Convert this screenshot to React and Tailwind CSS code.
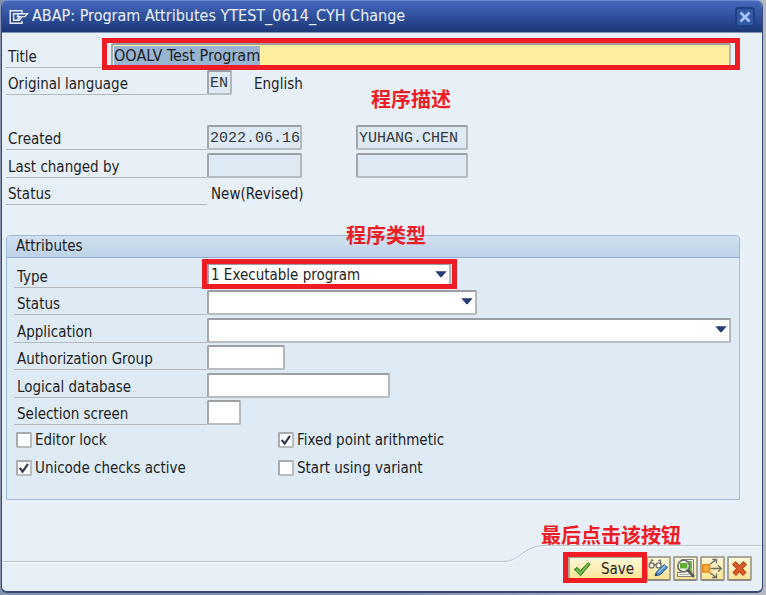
import { useEffect, useRef } from "react";

const frame =
  "h-[25px] rounded-[2px] border-2 border-t-[#9b9fa3] border-l-[#a3a7ab] border-r-[#b4b8bb] border-b-[#b9bdc0] outline-none";
const field = `${frame} bg-white px-[3px]`;
const display = `${frame} bg-[#deeaf3] pt-px pl-px font-['Liberation_Mono',monospace] text-[15px] leading-5 text-[#33363e]`;

function Label({ htmlFor, wide, children }) {
  return (
    <label
      htmlFor={htmlFor}
      className={`flex h-full shrink-0 items-end border-b border-[#b3b8bc] leading-5 ${
        wide ? "w-[201px] pl-[2px]" : "w-[193px] pl-[3px]"
      }`}
    >
      {children}
    </label>
  );
}

function Row({ children }) {
  return <div className="flex min-h-0 items-end">{children}</div>;
}

function Highlight({ className }) {
  return (
    <span aria-hidden="true" className={`pointer-events-none absolute border-5 border-[#ee1c24] ${className}`} />
  );
}

function Note({ className, children }) {
  return (
    <span
      className={`pointer-events-none absolute z-10 whitespace-nowrap font-['Noto_Sans_CJK_SC',sans-serif] text-[20px] font-bold leading-6 text-[#ee1c24] ${className}`}
    >
      {children}
    </span>
  );
}

function Select({ id, className, value }) {
  return (
    <div className={`relative ${className}`}>
      <select
        id={id}
        defaultValue={value}
        className={`${frame} block w-full appearance-none bg-white pl-[2px] leading-5`}
      >
        <option>{value}</option>
      </select>
      <svg viewBox="0 0 12 7" className="pointer-events-none absolute top-[8px] right-[4px] h-[7px] w-[12px]">
        <path d="M.3.3h11.4L6.8 5.9q-.8.8-1.6 0z" fill="#253d74" />
      </svg>
    </div>
  );
}

function Check({ id, checked, children }) {
  return (
    <div className="flex h-[25px] items-center gap-[3px]">
      <span className="relative block size-4">
        <input
          id={id}
          type="checkbox"
          defaultChecked={checked}
          className="peer block size-4 appearance-none rounded-[2px] border-2 border-[#a7abaf] border-r-[#b8bcbf] border-b-[#b8bcbf] bg-white"
        />
        <svg
          viewBox="0 0 16 16"
          className="pointer-events-none absolute inset-0 hidden size-4 peer-checked:block"
        >
          <path d="M3.8 7.8 6.6 11.6 12 3.8" fill="none" stroke="#33344d" strokeWidth="2.1" />
        </svg>
      </span>
      <label htmlFor={id} className="leading-5 whitespace-nowrap">
        {children}
      </label>
    </div>
  );
}

function ToolButton({ label, children, className = "w-[25px] justify-center" }) {
  return (
    <button
      type="button"
      aria-label={label}
      className={`flex h-[25px] items-center rounded-[2px] border-2 border-[#a9a698] border-b-[#8f8d83] bg-linear-to-b from-[#fff9d8] to-[#f8e293] ${className}`}
    >
      {children}
    </button>
  );
}

function GlassesPencil() {
  return (
    <svg viewBox="0 0 21 21" className="size-[21px] shrink-0">
      <g fill="#fffdf0" stroke="#6f6f68" strokeWidth="1.3">
        <circle cx="3.6" cy="7.4" r="2.5" />
        <circle cx="10.6" cy="7.4" r="2.5" />
        <path d="M6.1 7q1-1 2 0M1.4 6 3.8 1.8l1.6.8M12.8 6l-.6-4-1.8.6" fill="none" />
      </g>
      <path d="m7.2 17.6 1.3-3.8 7.9-7.4 3.2 3.2-7.9 7.4z" fill="#4c8fc6" stroke="#2b649d" />
      <path d="m10 14.6 7.4-7" stroke="#a5d0ee" strokeWidth="1.2" />
      <path d="m6.7 18.2 1-3.2 2.2 2.2z" fill="#23446e" />
    </svg>
  );
}

function PageSearch() {
  return (
    <svg viewBox="0 0 21 21" className="size-[21px] shrink-0">
      <path d="M6.5 1.5h12v17h-16v-4h4z" fill="#f5f5ef" stroke="#82827b" />
      <path d="M13 3h4v11h-4z" fill="#73ba3f" />
      <path d="M5 16.5h9" stroke="#a9a9a0" />
      <circle cx="8.7" cy="8" r="5.8" fill="#f7fbf2" stroke="#6d706d" strokeWidth="1.7" />
      <path d="M5 5h7.4v5.6H5z" fill="#62ad34" />
      <path d="m13 12.4 5.2 5.6" stroke="#565a58" strokeWidth="2.8" strokeLinecap="round" />
    </svg>
  );
}

function Distribute() {
  return (
    <svg viewBox="0 0 21 21" className="size-[21px] shrink-0">
      <path d="M1 6.9h6.4v7H1z" fill="#fbb040" stroke="#f08a1d" strokeWidth="1.8" />
      <g fill="none" stroke="#6e6e67" strokeWidth="1.3">
        <path d="M8.5 10.5h10.7M16 7.3l3.3 3.2-3.3 3.2M8 6.2l6-4.4M10.3 1.5h4.2v4M8 14.8l6 4.4M10.3 19.5h4.2v-4" />
      </g>
    </svg>
  );
}

function Cancel() {
  return (
    <svg viewBox="0 0 21 21" className="size-[21px] shrink-0">
      <path d="m4.8 4.8 11 11.4M16.2 4.8l-11 11.4" stroke="#a83c14" strokeWidth="5" />
      <path d="m5.2 5.2 10.2 10.6M15.8 5.2 5.6 15.8" stroke="#d95a29" strokeWidth="3.2" />
    </svg>
  );
}

export default function App() {
  const title = useRef(null);
  useEffect(() => {
    title.current.focus();
    title.current.select();
  }, []);

  return (
    <div className="min-h-screen bg-linear-to-r from-[#8591ad] via-[#8591ad] to-[#b4b7bd] pr-[3px] pl-px font-['DejaVu_Sans_Condensed','DejaVu_Sans',sans-serif] text-[15px] text-[#1c1e24]">
      <main className="overflow-hidden rounded-t-[7px] rounded-b-[6px] border-x border-b-2 border-[#364a7a] bg-[#e8f0f7]">
        <header className="flex h-[33px] items-center border-t border-b border-t-[#6b8bcf] border-b-[#8096bb] bg-linear-to-b from-[#4569bd] to-[#1b3878] pr-[7px] pl-[7px]">
          <svg viewBox="0 0 20 16" className="h-4 w-5" fill="none" stroke="#e6ecf8" strokeWidth="1.4">
            <path d="M13 4V1.7H1.2v12.6H13v-2.5M9.5 4.8H4.6v6.4h3.2l3.4-3.6H8.4l1.4-2.8h8.6l-2.4 2.8h-2.6l-3.2 3.6H7.5" />
          </svg>
          <h1 className="ml-[3px] flex-1 truncate pb-px text-[16px] leading-6 text-[#eef2fb]">
            ABAP: Program Attributes YTEST_0614_CYH Change
          </h1>
          <button
            type="button"
            aria-label="Close"
            className="flex size-5 items-center justify-center rounded-[3px] border-2 border-[#203f83] bg-[#3458a3]"
          >
            <svg viewBox="0 0 12 12" className="size-3 shrink-0" stroke="#a9c4fb" strokeWidth="2.6">
              <path d="m1.5 1.5 9 9M10.5 1.5l-9 9" />
            </svg>
          </button>
        </header>

        <form className="pt-[7px] pr-[22px] pl-[4px]" onSubmit={(e) => e.preventDefault()}>
          <div className="grid h-[165px] grid-rows-6">
            <Row>
              <Label htmlFor="title" wide>Title</Label>
              <div className="relative -ml-[98px] mr-[9px] flex-1 bg-[#e8f0f7] pl-[2px]">
                <input
                  id="title"
                  ref={title}
                  defaultValue="OOALV Test Program"
                  className={`${frame} block w-full bg-[#feee9e] pl-px text-[16px] leading-5 selection:bg-[#99b4d1] selection:text-[#1c1e24]`}
                />
                <Highlight className="-top-[5px] -right-[9px] -bottom-[2px] -left-[7px]" />
              </div>
            </Row>
            <Row>
              <Label htmlFor="lang" wide>Original language</Label>
              <input id="lang" readOnly defaultValue="EN" className={`${display} w-[25px]`} />
              <span className="relative ml-[22px] pb-px leading-5">
                English
                <Note className="top-[13px] left-[117px]">程序描述</Note>
              </span>
            </Row>
            <Row />
            <Row>
              <Label htmlFor="created" wide>Created</Label>
              <input id="created" readOnly defaultValue="2022.06.16" className={`${display} w-[95px]`} />
              <input aria-label="Created by" readOnly defaultValue="YUHANG.CHEN" className={`${display} ml-[54px] w-[112px]`} />
            </Row>
            <Row>
              <Label htmlFor="changed" wide>Last changed by</Label>
              <input id="changed" readOnly className={`${display} w-[95px]`} />
              <input aria-label="Changed by" readOnly className={`${display} ml-[54px] w-[112px]`} />
            </Row>
            <Row>
              <Label wide>Status</Label>
              <output className="pb-px pl-[4px] leading-5">New(Revised)</output>
            </Row>
          </div>

          <section className="relative mt-[30px] rounded-t-[4px] border border-[#9fbbd9] bg-[#deebf4] pb-[19px]">
            <h2 className="h-[22px] rounded-t-[3px] border-b border-[#91acd2] bg-linear-to-b from-[#d0e0ef] to-[#bed3e8] pl-[9px] leading-5">
              Attributes
            </h2>
            <Note className="-top-[13px] left-[339px]">程序类型</Note>
            <div className="mt-[2px] grid h-[220px] grid-rows-8 pr-[8px] pl-[7px]">
              <Row>
                <Label htmlFor="type">Type</Label>
                <div className="relative">
                  <Select id="type" value="1 Executable program" className="w-[244px]" />
                  <Highlight className="-top-[4px] -right-[6px] -bottom-px -left-[5px]" />
                </div>
              </Row>
              <Row>
                <Label htmlFor="status">Status</Label>
                <Select id="status" value="" className="w-[270px]" />
              </Row>
              <Row>
                <Label htmlFor="application">Application</Label>
                <Select id="application" value="" className="flex-1" />
              </Row>
              <Row>
                <Label htmlFor="group">Authorization Group</Label>
                <input id="group" className={`${field} w-[78px]`} />
              </Row>
              <Row>
                <Label htmlFor="database">Logical database</Label>
                <input id="database" className={`${field} w-[183px]`} />
              </Row>
              <Row>
                <Label htmlFor="screen">Selection screen</Label>
                <input id="screen" className={`${field} w-[34px]`} />
              </Row>
              <div className="grid grid-cols-[262px_1fr] items-end pl-[2px]">
                <Check id="lock">Editor lock</Check>
                <Check id="fixed" checked>Fixed point arithmetic</Check>
              </div>
              <div className="grid grid-cols-[262px_1fr] items-end pl-[2px]">
                <Check id="unicode" checked>Unicode checks active</Check>
                <Check id="variant">Start using variant</Check>
              </div>
            </div>
          </section>
        </form>

        <footer className="mt-[45px] flex h-[46px]">
          <div className="h-[17px] flex-1 border-b border-[#b5c2d1] shadow-[0_1px_0_#ffffff]" />
          <svg viewBox="0 0 40 18" className="h-[18px] w-[40px]" fill="none">
            <path d="M0 17.5C16 17.5 20 1.5 40 1.5" stroke="#fff" />
            <path d="M0 16.5C16 16.5 20 .5 40 .5" stroke="#b5c2d1" />
          </svg>
          <div className="relative flex items-start gap-[2px] border-t border-[#b5c2d1] pt-[10px] pr-[10px] pl-[24px] shadow-[inset_0_1px_0_#ffffff]">
            <Note className="-top-[23px] -left-[3px]">最后点击该按钮</Note>
            <div className="relative">
              <ToolButton label="Save" className="w-[76px] gap-[10px] pt-px pl-[3px]">
                <svg viewBox="0 0 18 16" className="h-4 w-[18px] shrink-0">
                  <path d="m1.2 8.5 3-2.2 3 3.6L15 1.7l2.2 1.6-9.6 11.5z" fill="#5cab35" stroke="#39802a" />
                  <path d="m3 8.5 4.2 4L15 3.6" fill="none" stroke="#8fd05f" />
                </svg>
                Save
              </ToolButton>
              <Highlight className="-top-[4px] -right-[3px] -bottom-[2px] -left-[5px] z-10" />
            </div>
            <ToolButton label="Display and change"><GlassesPencil /></ToolButton>
            <ToolButton label="Find in page"><PageSearch /></ToolButton>
            <ToolButton label="Distribute"><Distribute /></ToolButton>
            <ToolButton label="Cancel"><Cancel /></ToolButton>
          </div>
        </footer>
      </main>
    </div>
  );
}
